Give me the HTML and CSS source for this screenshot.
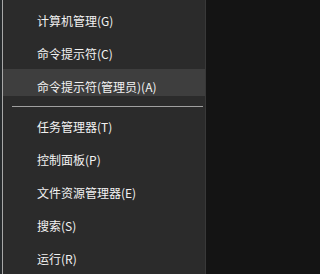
FILE: index.html
```html
<!DOCTYPE html>
<html lang="zh-CN">
<head>
<meta charset="utf-8">
<link rel="stylesheet" href="styles.css">
</head>
<body>
<div class="screen">
  <div class="edge-dark"></div>
  <div class="edge-light"></div>
  <div class="menu">
    <div class="item">计算机管理(G)</div>
    <div class="item">命令提示符(C)</div>
    <div class="item active">命令提示符(管理员)(A)</div>
    <div class="sep"></div>
    <div class="item">任务管理器(T)</div>
    <div class="item">控制面板(P)</div>
    <div class="item">文件资源管理器(E)</div>
    <div class="item">搜索(S)</div>
    <div class="item">运行(R)</div>
  </div>
  <div class="outside"></div>
</div>
</body>
</html>
```
FILE: styles.css
```css
html, body {
  margin: 0;
  padding: 0;
  background: #141414;
}
.screen {
  display: flex;
  width: 212px;
  height: 274px;
  overflow: hidden;
}
.edge-dark {
  width: 2px;
  background: #262a2c;
}
.edge-light {
  width: 1px;
  background: #a8a8a8;
}
.menu {
  width: 203px;
  background: #2b2b2b;
  border-right: 1px solid #383838;
  padding-top: 4px;
  box-sizing: border-box;
  height: 274px;
  font-family: "Noto Sans CJK SC", "Noto Sans", sans-serif;
  font-size: 12px;
  color: #f2f2f2;
}
.outside {
  flex: 1;
  background: #141414;
}
.item {
  height: 33px;
  display: flex;
  align-items: center;
  padding-left: 34px;
  box-sizing: border-box;
  white-space: nowrap;
}
.item.active {
  height: 27px;
  margin-top: -1px;
  padding-top: 8px;
  background: #3e3e3e;
}
.sep {
  height: 1px;
  margin: 10px 2px 3px 9px;
  background: #a0a0a0;
}
```
